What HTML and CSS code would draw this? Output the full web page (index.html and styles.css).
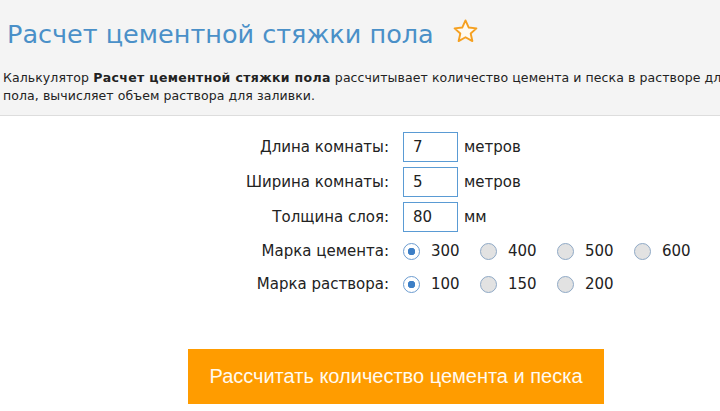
FILE: index.html
```html
<!DOCTYPE html>
<html lang="ru">
<head>
  <meta charset="UTF-8" />
  <title>Расчет цементной стяжки пола</title>
  <link rel="stylesheet" href="styles.css">
</head>
<body>
  <div class="header">
    <h1>Расчет цементной стяжки пола
      <svg class="star" viewBox="0 0 24 24" width="27" height="27">
        <path d="M12 2.2l2.9 6.3 6.8.7-5.1 4.6 1.5 6.7L12 17.1l-6.1 3.4 1.5-6.7-5.1-4.6 6.8-.7z" fill="#fffaf0" stroke="#f5a020" stroke-width="1.7" stroke-linejoin="round"/>
      </svg>
    </h1>
    <p class="descr">
      Калькулятор <b>Расчет цементной стяжки пола</b> рассчитывает количество цемента и песка в растворе для стяжки<br>
      пола, вычисляет объем раствора для заливки.
    </p>
  </div>

  <form class="calc" id="calcForm">
    <div class="row">
      <label for="len">Длина комнаты:</label>
      <div class="ctrl"><input type="text" id="len" value="7"> <span>метров</span></div>
    </div>
    <div class="row">
      <label for="wid">Ширина комнаты:</label>
      <div class="ctrl"><input type="text" id="wid" value="5"> <span>метров</span></div>
    </div>
    <div class="row">
      <label for="thick">Толщина слоя:</label>
      <div class="ctrl"><input type="text" id="thick" value="80"> <span>мм</span></div>
    </div>
    <div class="row radio-row">
      <label>Марка цемента:</label>
      <div class="ctrl">
        <label class="opt"><input type="radio" name="cem" checked> 300</label>
        <label class="opt"><input type="radio" name="cem"> 400</label>
        <label class="opt"><input type="radio" name="cem"> 500</label>
        <label class="opt"><input type="radio" name="cem"> 600</label>
      </div>
    </div>
    <div class="row radio-row">
      <label>Марка раствора:</label>
      <div class="ctrl">
        <label class="opt"><input type="radio" name="sol" checked> 100</label>
        <label class="opt"><input type="radio" name="sol"> 150</label>
        <label class="opt"><input type="radio" name="sol"> 200</label>
      </div>
    </div>

    <div class="buttons">
      <button type="button">Рассчитать количество цемента и песка</button>
    </div>
  </form>
</body>
</html>
```

FILE: styles.css
```css
body {
  font-family: "DejaVu Sans", Verdana, sans-serif;
  background: #fff;
  color: #222;
  margin: 0;
  padding: 0;
  overflow: hidden;
}
.header {
  background: #f4f4f4;
  border-bottom: 1px solid #ddd;
  height: 116px;
  box-sizing: border-box;
  padding: 14px 0 0 7px;
  width: 800px;
}
h1 {
  margin: 0;
  font-size: 25.5px;
  font-weight: normal;
  color: #4a90c8;
  line-height: 40px;
  display: flex;
  align-items: center;
  gap: 18px;
}
.star {
  margin-top: -6px;
}
.descr {
  margin: 15px 0 0 -4px;
  font-size: 12.5px;
  line-height: 18px;
  letter-spacing: 0.08px;
  color: #222;
}
.descr b {
  letter-spacing: 0.35px;
}
.calc {
  padding-top: 16px;
}
.row {
  display: grid;
  grid-template-columns: 389px auto;
  column-gap: 14px;
  align-items: center;
  height: 30px;
  margin-bottom: 5px;
  font-size: 15px;
}
.row > label {
  text-align: right;
  color: #222;
}
.ctrl {
  display: flex;
  align-items: center;
}
.ctrl input[type=text] {
  width: 55px;
  height: 30px;
  box-sizing: border-box;
  border: 1px solid #5a9bd4;
  padding: 0 9px;
  font-family: inherit;
  font-size: 15px;
  color: #222;
  margin-right: 6px;
}
.radio-row {
  height: 28px;
}
.opt {
  display: flex;
  align-items: center;
  width: 77px;
}
.opt input {
  appearance: none;
  width: 17px;
  height: 17px;
  margin: 0 11px 0 0;
  border: 1px solid #8fa9c6;
  border-radius: 50%;
  background: #e2e2e2;
  box-sizing: border-box;
}
.opt input:checked {
  background: radial-gradient(circle, #3d7fc6 0 3.5px, #fff 4px);
  border-color: #6c9cd0;
}
.buttons {
  padding: 46px 0 0 188px;
}
button {
  width: 416px;
  height: 55px;
  border: none;
  background-color: #ff9c00;
  color: #fffaf0;
  font-family: "Liberation Sans", Arial, sans-serif;
  font-size: 20px;
  cursor: pointer;
}
```
